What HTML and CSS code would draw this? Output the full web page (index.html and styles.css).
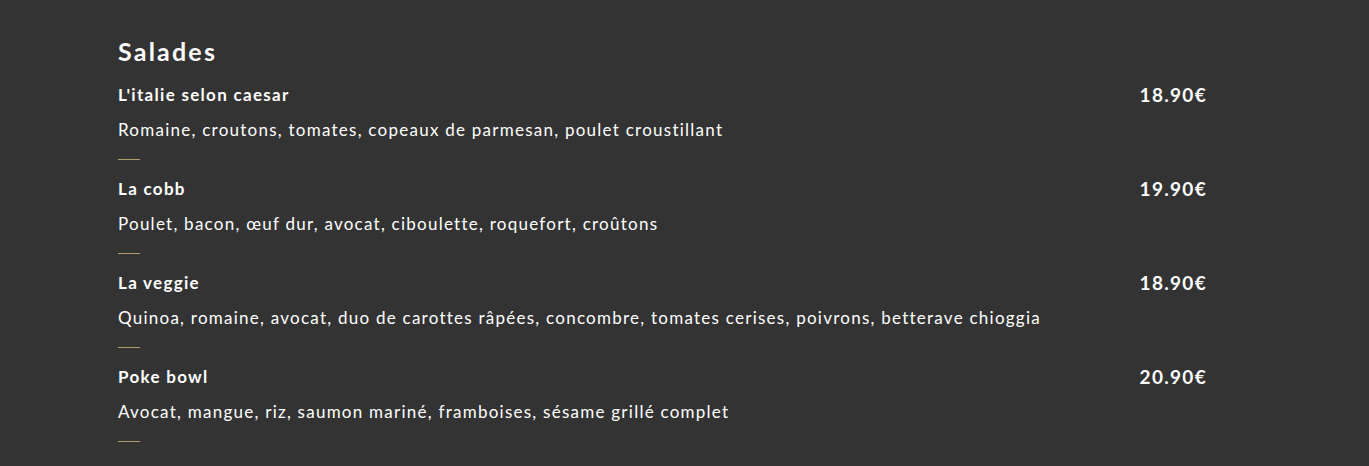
FILE: index.html
```html
<!DOCTYPE html>
<html lang="fr">
<head>
<meta charset="utf-8">
<link rel="stylesheet" href="styles.css">
</head>
<body>
<section class="menu">
  <h2 class="menu-title">Salades</h2>
  <div class="item">
    <div class="item-head"><h3 class="item-name">L'italie selon caesar</h3><span class="item-price">18.90€</span></div>
    <p class="item-desc">Romaine, croutons, tomates, copeaux de parmesan, poulet croustillant</p>
    <div class="item-rule"></div>
  </div>
  <div class="item">
    <div class="item-head"><h3 class="item-name">La cobb</h3><span class="item-price">19.90€</span></div>
    <p class="item-desc">Poulet, bacon, œuf dur, avocat, ciboulette, roquefort, croûtons</p>
    <div class="item-rule"></div>
  </div>
  <div class="item">
    <div class="item-head"><h3 class="item-name">La veggie</h3><span class="item-price">18.90€</span></div>
    <p class="item-desc">Quinoa, romaine, avocat, duo de carottes râpées, concombre, tomates cerises, poivrons, betterave chioggia</p>
    <div class="item-rule"></div>
  </div>
  <div class="item">
    <div class="item-head"><h3 class="item-name">Poke bowl</h3><span class="item-price">20.90€</span></div>
    <p class="item-desc">Avocat, mangue, riz, saumon mariné, framboises, sésame grillé complet</p>
    <div class="item-rule"></div>
  </div>
</section>
</body>
</html>
```

FILE: styles.css
```css
html, body {
  margin: 0;
  padding: 0;
  background: #333333;
  color: #ffffff;
  font-family: Lato, "Open Sans", sans-serif;
}
.menu {
  width: 1089px;
  margin: 0 0 0 118px;
  padding-top: 34px;
}
.menu-title {
  margin: 0 0 15px;
  font-size: 25px;
  font-weight: 700;
  letter-spacing: 2.2px;
  line-height: 34px;
}
.item {
  margin-bottom: 17px;
}
.item-head {
  display: flex;
  justify-content: space-between;
  align-items: center;
}
.item-name {
  margin: 0;
  font-size: 17px;
  font-weight: 700;
  letter-spacing: 1.3px;
  line-height: 24px;
}
.item-price {
  font-size: 19px;
  font-weight: 700;
  letter-spacing: 1.3px;
  line-height: 24px;
}
.item-desc {
  margin: 11px 0 0;
  font-size: 17px;
  letter-spacing: 1.25px;
  line-height: 24px;
}
.item-rule {
  width: 22px;
  height: 1px;
  background: #b39a6b;
  margin-top: 17px;
}
```
